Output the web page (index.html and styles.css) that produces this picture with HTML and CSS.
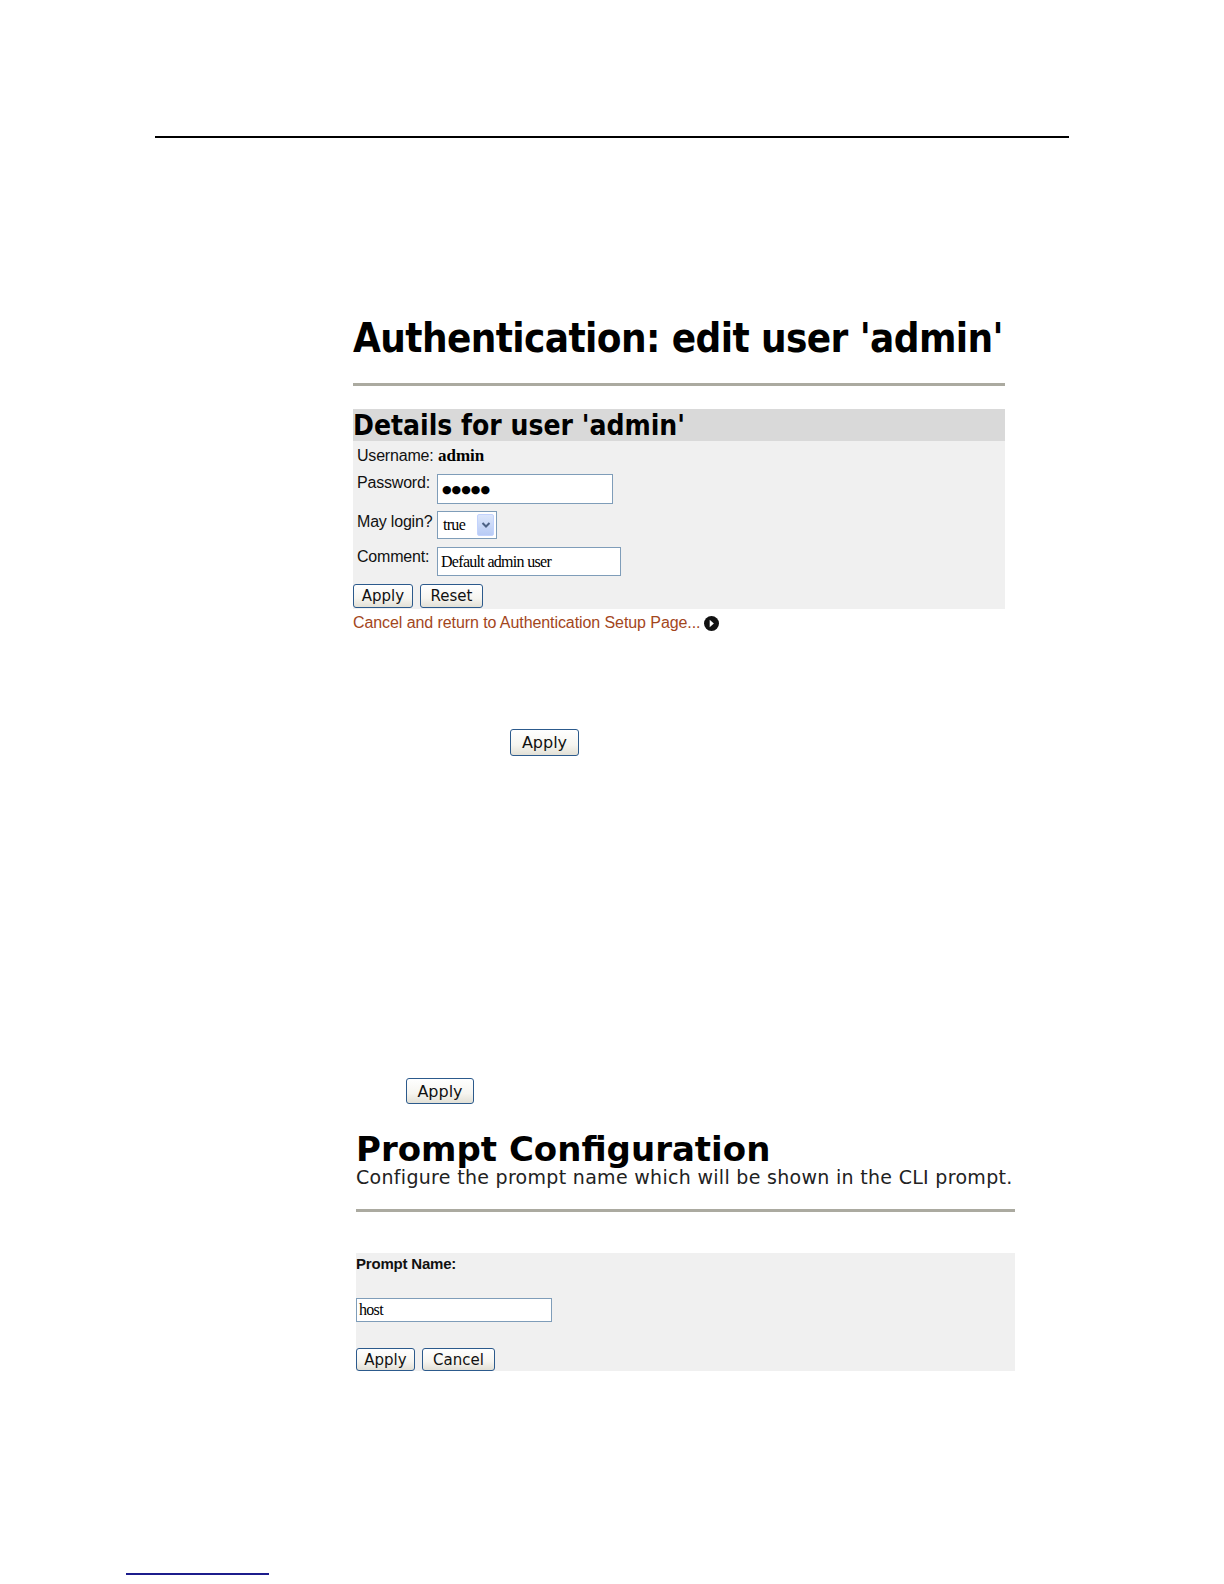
FILE: index.html
```html
<!DOCTYPE html>
<html>
<head>
<meta charset="utf-8">
<link rel="stylesheet" href="styles.css">
</head>
<body>
<div class="top-rule"></div>

<div class="auth">
  <h1 class="auth-title">Authentication: edit user 'admin'</h1>
  <div class="gray-rule"></div>
  <div class="details">
    <h2 class="details-title">Details for user 'admin'</h2>
    <div class="row row-user">
      <span class="label">Username:</span>
      <span class="value">admin</span>
    </div>
    <div class="row row-pass">
      <span class="label">Password:</span>
      <div class="field field-pass"><span class="dots">●●●●●</span></div>
    </div>
    <div class="row row-login">
      <span class="label">May login?</span>
      <div class="select">
        <span class="select-text">true</span>
        <span class="select-btn"><svg width="10" height="8" viewBox="0 0 10 8"><path d="M1.5 2 L5 5.5 L8.5 2" fill="none" stroke="#4d6185" stroke-width="2"/></svg></span>
      </div>
    </div>
    <div class="row row-comment">
      <span class="label">Comment:</span>
      <div class="field field-comment"><span class="serif">Default admin user</span></div>
    </div>
    <div class="btn-row">
      <span class="btn btn-apply1">Apply</span>
      <span class="btn btn-reset">Reset</span>
    </div>
  </div>
  <div class="cancel-link">Cancel and return to Authentication Setup Page... <span class="go-icon"><svg width="15" height="15" viewBox="0 0 14 14"><circle cx="7" cy="7" r="7" fill="#111"/><path d="M5.3 3.6 L9.2 7 L5.3 10.4 Z" fill="#fff"/></svg></span></div>
</div>

<div class="apply-a"><span class="btn btn-apply2">Apply</span></div>

<div class="apply-b"><span class="btn btn-apply3">Apply</span></div>

<div class="prompt">
  <h1 class="prompt-title">Prompt Configuration</h1>
  <p class="prompt-sub">Configure the prompt name which will be shown in the CLI prompt.</p>
  <div class="gray-rule prompt-rule"></div>
  <div class="prompt-box">
    <div class="prompt-label">Prompt Name:</div>
    <div class="field field-host"><span class="serif">host</span></div>
    <div class="btn-row prompt-btns">
      <span class="btn btn-apply4">Apply</span>
      <span class="btn btn-cancel">Cancel</span>
    </div>
  </div>
</div>

<div class="foot-rule"></div>
</body>
</html>
```

FILE: styles.css
```css
body {
  margin: 0;
  background: #fff;
  font-family: "Liberation Sans", Arial, sans-serif;
  color: #000;
}

.top-rule {
  margin: 136px 0 0 155px;
  width: 914px;
  height: 2px;
  background: #000;
}

.auth {
  margin-left: 353px;
  width: 652px;
}

.auth-title {
  margin: 176px 0 0 0;
  font-family: "DejaVu Sans Condensed", "DejaVu Sans", sans-serif;
  font-stretch: condensed;
  font-weight: bold;
  font-size: 40px;
  letter-spacing: -0.6px;
  line-height: 48px;
  white-space: nowrap;
}

.gray-rule {
  height: 3px;
  background: #abaaa0;
  margin-top: 21px;
}

.details {
  margin-top: 23px;
  background: #f0f0f0;
  height: 200px;
}

.details-title {
  margin: 0;
  background: #d9d9d9;
  height: 32px;
  font-family: "DejaVu Sans Condensed", "DejaVu Sans", sans-serif;
  font-stretch: condensed;
  font-weight: bold;
  font-size: 28px;
  line-height: 33px;
  white-space: nowrap;
}

.row {
  display: flex;
  align-items: flex-start;
  padding-left: 4px;
}

.label {
  width: 80px;
  flex: none;
  font-size: 16px;
  line-height: 18px;
  color: #111;
  letter-spacing: -0.2px;
}

.row-user { margin-top: 2px; height: 26px; align-items: center; }
.row-user .label { line-height: 26px; }
.value {
  font-family: "Liberation Serif", serif;
  font-weight: bold;
  font-size: 17px;
  line-height: 26px;
  letter-spacing: 0;
  margin-left: 1px;
}

.row-pass { margin-top: 5px; }
.row-login { margin-top: 7px; }
.row-login .label { padding-top: 2px; }
.row-comment { margin-top: 8px; }
.row-comment .label { padding-top: 1px; }

.field {
  box-sizing: border-box;
  border: 1px solid #7f9db9;
  background: #fff;
  display: flex;
  align-items: center;
}

.field-pass { width: 176px; height: 30px; padding-left: 4px; }
.dots {
  font-family: "DejaVu Sans", sans-serif;
  font-size: 11px;
  line-height: 1;
}

.field-comment { width: 184px; height: 29px; padding-left: 3px; }

.serif {
  font-family: "Liberation Serif", serif;
  font-size: 16px;
  letter-spacing: -0.7px;
}

.select {
  box-sizing: border-box;
  width: 60px;
  height: 28px;
  border: 1px solid #7f9db9;
  background: #fff;
  display: flex;
  align-items: center;
  justify-content: space-between;
  padding: 2px 2px 2px 5px;
}
.select-text {
  font-family: "Liberation Serif", serif;
  font-size: 16px;
  letter-spacing: -0.7px;
}
.select-btn {
  width: 17px;
  height: 22px;
  border-radius: 2px;
  background: linear-gradient(#dce6fb, #b8cbf5);
  border: 1px solid #c3d3fd;
  box-sizing: border-box;
  display: flex;
  align-items: center;
  justify-content: center;
}

.btn-row {
  display: flex;
  gap: 7px;
  margin-top: 8px;
}

.btn {
  box-sizing: border-box;
  display: inline-flex;
  align-items: center;
  justify-content: center;
  height: 24px;
  border: 1px solid #2c5a8c;
  border-radius: 3px;
  background: linear-gradient(#ffffff 0%, #f6f5f0 60%, #e2e0d6 100%);
  font-family: "DejaVu Sans", sans-serif;
  font-size: 15px;
  color: #111;
}

.btn-apply1 { width: 60px; }
.btn-reset { width: 63px; }

.cancel-link {
  margin-top: 4px;
  font-size: 16px;
  line-height: 20px;
  color: #a3461c;
  letter-spacing: -0.08px;
  white-space: nowrap;
  display: flex;
  align-items: center;
}
.go-icon {
  display: inline-flex;
  margin-left: 4px;
}

.apply-a {
  margin: 96px 0 0 510px;
}
.btn-apply2 { width: 69px; height: 27px; font-size: 16px; }

.apply-b {
  margin: 322px 0 0 406px;
}
.btn-apply3 { width: 68px; height: 26px; font-size: 16px; }

.prompt {
  margin-left: 356px;
  width: 659px;
}

.prompt-title {
  margin: 27px 0 0 0;
  font-family: "DejaVu Sans", sans-serif;
  font-weight: bold;
  font-size: 34px;
  line-height: 36px;
  white-space: nowrap;
}

.prompt-sub {
  margin: 0;
  font-family: "DejaVu Sans", sans-serif;
  font-size: 19px;
  letter-spacing: 0.3px;
  line-height: 20px;
  color: #222;
  white-space: nowrap;
}

.prompt-rule { margin-top: 22px; }

.prompt-box {
  margin-top: 41px;
  background: #f0f0f0;
  height: 118px;
}

.prompt-label {
  padding-top: 1px;
  font-size: 15px;
  font-weight: bold;
  line-height: 20px;
  letter-spacing: -0.2px;
  color: #111;
}

.field-host {
  margin-top: 24px;
  width: 196px;
  height: 24px;
  padding-left: 2px;
}

.prompt-btns { margin-top: 26px; }
.btn-apply4 { width: 59px; height: 23px; }
.btn-cancel { width: 73px; height: 23px; }

.foot-rule {
  margin: 202px 0 0 126px;
  width: 143px;
  height: 2px;
  background: #1c1c8c;
}
```
